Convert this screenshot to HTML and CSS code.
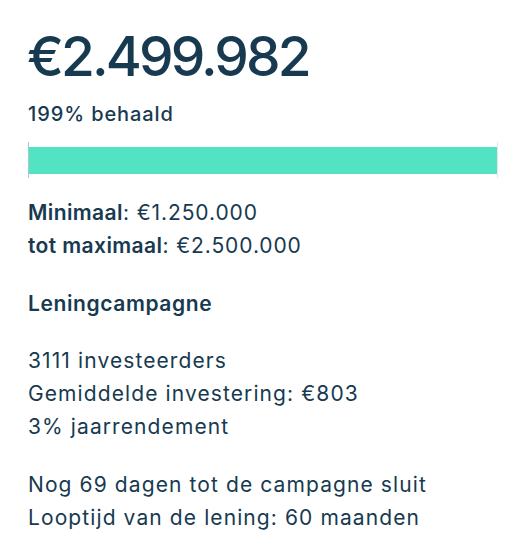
FILE: index.html
```html
<!DOCTYPE html>
<html lang="nl">
<head>
<meta charset="utf-8">
<link rel="stylesheet" href="styles.css">
</head>
<body>
<div class="card">
  <div class="amount">€2.499.982</div>
  <div class="reached">199% behaald</div>
  <div class="bar"><div class="fill" style="width:100%"></div></div>
  <div class="limits">
    <div><span class="strong">Minimaal</span>: €1.250.000</div>
    <div><span class="strong">tot maximaal</span>: €2.500.000</div>
  </div>
  <div class="title">Leningcampagne</div>
  <div class="group">
    <div>3111 investeerders</div>
    <div>Gemiddelde investering: €803</div>
    <div>3% jaarrendement</div>
  </div>
  <div class="group">
    <div>Nog 69 dagen tot de campagne sluit</div>
    <div>Looptijd van de lening: 60 maanden</div>
  </div>
</div>
</body>
</html>
```
FILE: styles.css
```css
html, body {
  margin: 0;
  padding: 0;
  background: #ffffff;
}
body {
  font-family: "Inter", "Liberation Sans", sans-serif;
  color: #173a50;
}
.card {
  padding: 24px 23px 0 28px;
}
.amount {
  font-size: 55px;
  font-weight: 500;
  line-height: 64px;
  letter-spacing: -2.9px;
  margin-left: -1px;
}
.reached {
  margin-top: 12px;
  font-size: 20px;
  font-weight: 500;
  line-height: 28px;
  letter-spacing: 0.9px;
}
.bar {
  margin-top: 14px;
  height: 36px;
  display: flex;
  align-items: center;
  border-left: 1px solid #a8c8c8;
  border-right: 1px solid #e6e6e6;
}
.fill {
  height: 27px;
  background: #52e3c2;
}
.limits {
  margin-top: 18px;
  font-size: 21px;
  line-height: 33px;
  letter-spacing: 0.9px;
}
.strong {
  font-weight: 600;
  letter-spacing: 0.4px;
}
.title {
  margin-top: 25px;
  font-size: 21px;
  font-weight: 600;
  line-height: 33px;
  letter-spacing: 0.6px;
}
.group {
  margin-top: 24px;
  font-size: 21px;
  line-height: 33px;
  letter-spacing: 1.1px;
}
.group + .group {
  margin-top: 25px;
}
```
